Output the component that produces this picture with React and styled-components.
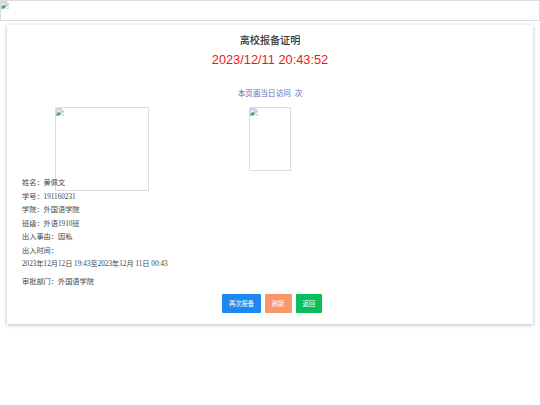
import React from 'react'
import styled, { createGlobalStyle } from 'styled-components'


const GlobalStyle = createGlobalStyle`
  * { box-sizing: border-box; }

  body {
    margin: 0;
    background-color: #fff;
    font-family: "Liberation Serif", "Noto Sans CJK SC", serif;
    font-size: 7.2px;
    color: #444;
  }
`;

const Page = styled.div`
  min-height: 100vh;
`;

const Frame = styled.div`
  width: ${props => props.$w};
  height: ${props => props.$h}px;
  border: 1px solid #dcdcdc;
  line-height: 0;
`;

const Card = styled.div`
  height: 299px;
  margin: 4px 7px 0;
  padding: 8px 15px 0;
  background-color: #fff;
  box-shadow: 0 0.5px 4px rgba(0, 0, 0, 0.27);
`;

const Title = styled.h1`
  margin: 0;
  font-family: "Liberation Sans", "Noto Sans CJK SC", sans-serif;
  font-size: 10.1px;
  font-weight: 500;
  line-height: 15px;
  text-align: center;
  color: #333;
`;

const Clock = styled.div`
  margin-top: 4px;
  font-family: "Liberation Sans", sans-serif;
  font-size: 12.8px;
  line-height: 16px;
  text-align: center;
  color: #f01414;
`;

const Visits = styled.div`
  margin-top: 20px;
  font-size: 7.6px;
  line-height: 12px;
  text-align: center;
  white-space: pre;
  color: #6762b4;
`;

/* the first photo is taller than the strip and runs behind the name row */
const Photos = styled.div`
  display: flex;
  align-items: flex-start;
  height: 70px;
  margin-top: 7px;
  padding-left: 33px;
  gap: 100px;
`;

const Row = styled.div`
  height: 13.5px;
  line-height: 13.5px;
  margin-top: ${props => props.$gap || 0}px;
  white-space: pre;
`;

const Buttons = styled.div`
  display: flex;
  justify-content: center;
  gap: 4px;
  margin-top: 4px;
  padding-left: 4px;
`;

const Button = styled.button`
  width: ${props => props.$w}px;
  height: 19px;
  padding: 0;
  border: 0;
  border-radius: 1px;
  background-color: ${props => props.$bg};
  color: #fff;
  font-family: "Noto Sans CJK SC", sans-serif;
  font-size: 6.3px;
  line-height: 19px;
`;

const rows = [
  '姓名：黄佩文',
  '学号：191160231',
  '学院：外国语学院',
  '班级：外语1910班',
  '出入事由：因私',
  '出入时间：',
  '2023年12月12日 19:43至2023年12月 11日 00:43',
]

function BrokenImage() {
  return (
    <svg width="8" height="8" viewBox="0 0 16 16">
      <path d="M1 1h9l5 5v9H1z" fill="#c9d8ee" stroke="#b3b8bf" />
      <path d="M10 1v5h5z" fill="#fff" stroke="#b3b8bf" />
      <circle cx="5" cy="6" r="2" fill="#fff" />
      <path d="M1 15v-3l5-4 4 3-4 4z" fill="#5da24e" />
      <path d="M7 16l9-8v3l-6 5z" fill="#fff" />
    </svg>
  )
}

export default function App() {
  return (
    <Page>
      <GlobalStyle />
      <Frame $w="100%" $h={21}><BrokenImage /></Frame>
      <Card>
        <Title>离校报备证明</Title>
        <Clock>2023/12/11 20:43:52</Clock>
        <Visits>{'本页面当日访问  次'}</Visits>
        <Photos>
          <Frame $w="94px" $h={84}><BrokenImage /></Frame>
          <Frame $w="42px" $h={64}><BrokenImage /></Frame>
        </Photos>
        {rows.map(text => <Row key={text}>{text}</Row>)}
        <Row $gap={4.5}>审批部门：外国语学院</Row>
        <Buttons>
          <Button $w={39} $bg="#1e87f0">再次报备</Button>
          <Button $w={26.5} $bg="#f9966b">刷新</Button>
          <Button $w={26.5} $bg="#0abf5b">返回</Button>
        </Buttons>
      </Card>
    </Page>
  )
}
